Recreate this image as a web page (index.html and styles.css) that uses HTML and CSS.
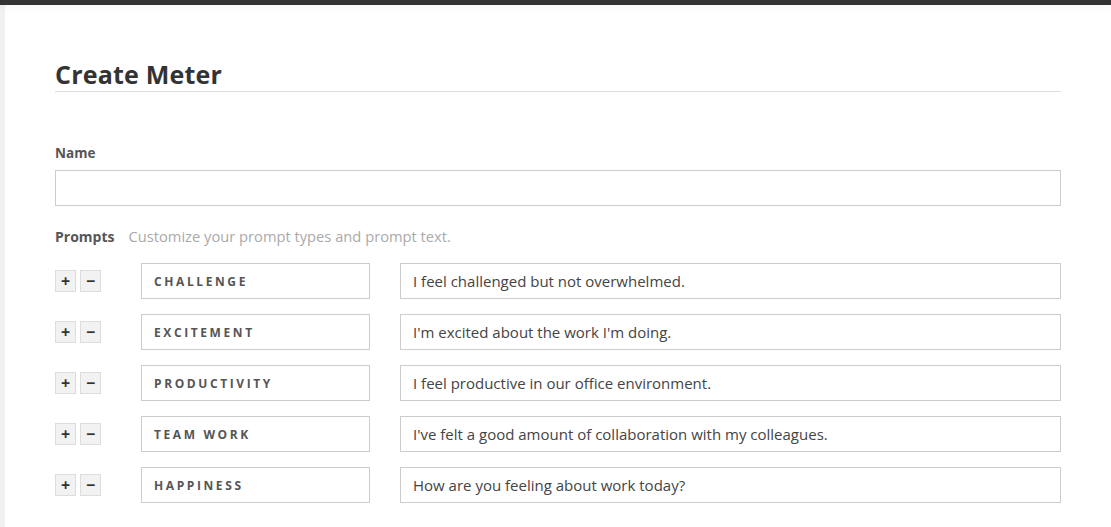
FILE: index.html
```html
<!DOCTYPE html>
<html>
<head>
<meta charset="utf-8">
<link rel="stylesheet" href="styles.css">
</head>
<body>
<div class="topbar"></div>
<div class="shell">
  <div class="side"></div>
  <main class="panel">
    <h1 class="title">Create Meter</h1>
    <div class="field">
      <label class="label">Name</label>
      <div class="input name-input"></div>
    </div>
    <div class="prompts-head">
      <span class="label">Prompts</span>
      <span class="hint">Customize your prompt types and prompt text.</span>
    </div>
    <div class="rows">
      <div class="row">
        <div class="btns"><span class="btn">+</span><span class="btn">−</span></div>
        <div class="input type">CHALLENGE</div>
        <div class="input text">I feel challenged but not overwhelmed.</div>
      </div>
      <div class="row">
        <div class="btns"><span class="btn">+</span><span class="btn">−</span></div>
        <div class="input type">EXCITEMENT</div>
        <div class="input text">I'm excited about the work I'm doing.</div>
      </div>
      <div class="row">
        <div class="btns"><span class="btn">+</span><span class="btn">−</span></div>
        <div class="input type">PRODUCTIVITY</div>
        <div class="input text">I feel productive in our office environment.</div>
      </div>
      <div class="row">
        <div class="btns"><span class="btn">+</span><span class="btn">−</span></div>
        <div class="input type">TEAM WORK</div>
        <div class="input text">I've felt a good amount of collaboration with my colleagues.</div>
      </div>
      <div class="row">
        <div class="btns"><span class="btn">+</span><span class="btn">−</span></div>
        <div class="input type">HAPPINESS</div>
        <div class="input text">How are you feeling about work today?</div>
      </div>
    </div>
  </main>
</div>
</body>
</html>
```
FILE: styles.css
```css
html, body {
  margin: 0;
  padding: 0;
  height: 100%;
  overflow: hidden;
  background: #fff;
  font-family: "Open Sans", "Noto Sans", sans-serif;
  color: #444;
}
.topbar {
  height: 5px;
  background: #333;
  box-shadow: 0 2px 8px rgba(0,0,0,0.06);
  position: relative;
  z-index: 2;
}
.shell {
  display: flex;
  height: calc(100% - 5px);
}
.side {
  width: 5px;
  background: #f1f1f1;
  flex: none;
}
.panel {
  flex: none;
  width: 1006px;
  padding: 0 0 0 50px;
}
.title {
  margin: 54px 0 0;
  font-size: 25px;
  font-weight: 700;
  color: #333;
  line-height: 30px;
  padding-bottom: 2px;
  border-bottom: 1px solid #ddd;
  letter-spacing: 0.2px;
}
.field {
  margin-top: 52px;
}
.label {
  display: block;
  font-size: 13.5px;
  font-weight: 700;
  color: #555;
  line-height: 18px;
}
.input {
  box-sizing: border-box;
  border: 1px solid #ccc;
  height: 36px;
  background: #fff;
}
.name-input {
  margin-top: 8px;
  width: 1006px;
}
.prompts-head {
  margin-top: 21px;
  display: flex;
  align-items: baseline;
  gap: 14px;
  line-height: 18px;
}
.prompts-head .label {
  display: inline;
  font-size: 14px;
}
.hint {
  font-size: 14.7px;
  color: #aaa;
}
.rows {
  margin-top: 17px;
  display: flex;
  flex-direction: column;
  gap: 15px;
}
.row {
  display: flex;
  align-items: center;
}
.btns {
  display: flex;
  gap: 4px;
  width: 86px;
  flex: none;
}
.btn {
  box-sizing: border-box;
  width: 21px;
  height: 22px;
  background: #f2f2f2;
  border: 1px solid #ddd;
  font-size: 16px;
  font-weight: 700;
  color: #333;
  display: flex;
  align-items: center;
  justify-content: center;
  line-height: 1;
}
.type {
  width: 229px;
  flex: none;
  padding-left: 12px;
  display: flex;
  align-items: center;
  font-size: 12px;
  font-weight: 700;
  letter-spacing: 2.6px;
  color: #555;
}
.text {
  margin-left: 30px;
  width: 661px;
  flex: none;
  padding-left: 12px;
  display: flex;
  align-items: center;
  font-size: 15px;
  color: #444;
}
```
